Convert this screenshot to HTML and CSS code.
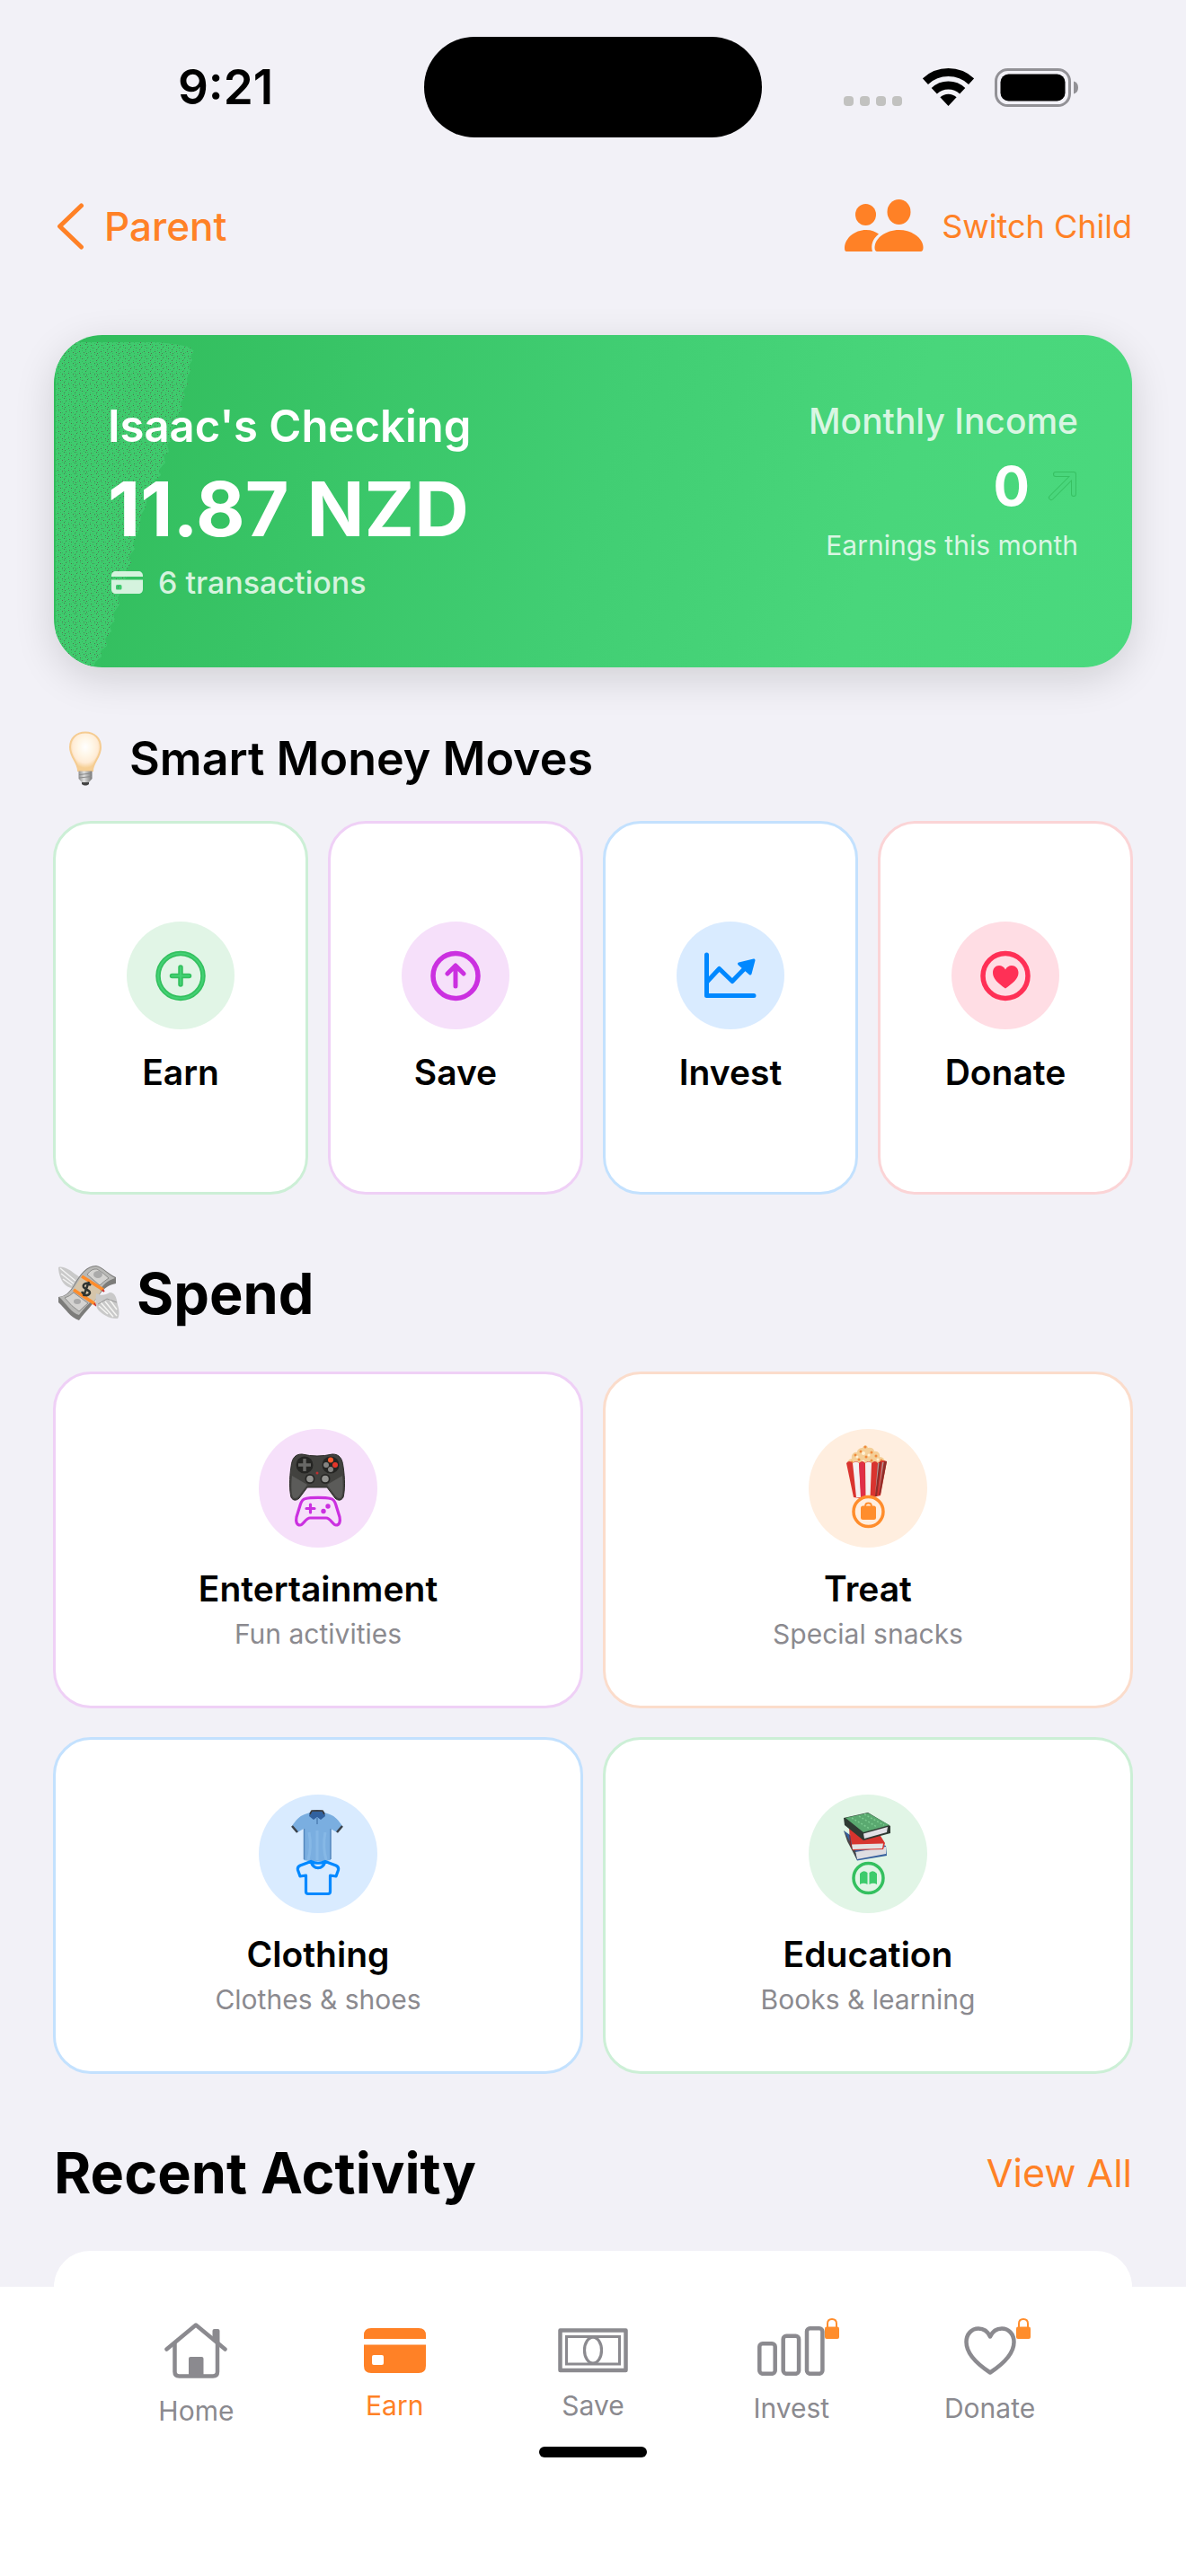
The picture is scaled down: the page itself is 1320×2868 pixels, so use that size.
FILE: index.html
```html
<!DOCTYPE html>
<html lang="en">
<head>
<meta charset="utf-8">
<meta name="viewport" content="width=device-width, initial-scale=1">
<title>Isaac's Checking</title>
<link rel="stylesheet" href="styles.css">
</head>
<body>
<div class="app">
  <div class="status-bar">
    <span class="status-time">9:21</span>
    <span class="island"></span>
    <div class="status-icons">
      <svg width="65" height="42" viewBox="0 0 65 42" fill="#c2c2c0" aria-hidden="true"><rect y="31" width="11" height="11" rx="4"/><rect x="18" y="31" width="11" height="11" rx="4"/><rect x="36" y="31" width="11" height="11" rx="4"/><rect x="54" y="31" width="11" height="11" rx="4"/></svg>
      <svg width="57" height="42" viewBox="0 0 57 42" fill="none" stroke="#000" stroke-width="9" aria-hidden="true"><path d="M2.9 14.6A37.5 37.5 0 0 1 54.1 14.6M12.8 25.2A23 23 0 0 1 44.2 25.2"/><path d="M28.500 42L19.400 32.300A13.300 13.300 0 0 1 37.600 32.300Z" fill="#000" stroke="none"/></svg>
      <svg width="93" height="43" viewBox="0 0 93 43" aria-hidden="true"><rect x="1.500" y="1.500" width="82" height="40" rx="13" fill="none" stroke="#929196" stroke-width="3"/><rect x="6.500" y="6.500" width="72" height="30" rx="9"/><path d="M88 14.500C91.500 15.500 93 18 93 21.500S91.500 27.500 88 28.500Z" fill="#929196"/></svg>
    </div>
  </div>

  <header class="top-nav">
    <button class="nav-button nav-back" type="button">
      <svg width="36" height="52" viewBox="0 0 36 52" fill="none" stroke="currentColor" stroke-width="5" stroke-linecap="round" stroke-linejoin="round" aria-hidden="true"><path d="M30.500 3L6.500 26L30.500 49"/></svg>
      <span>Parent</span>
    </button>
    <button class="nav-button nav-switch" type="button">
      <svg width="88" height="60" viewBox="0 0 88 60" fill="currentColor" aria-hidden="true"><ellipse cx="23.500" cy="17" rx="11.500" ry="12"/><ellipse cx="60.500" cy="14" rx="13" ry="14"/><path d="M3 58C0 58 0 56 0 53C1 43 11 34 24 34C30 34 34 36 38 38.500C31 44 29 51 31 58Z"/><path d="M37 58C34 58 33.500 56 33.500 53C34 43 46 34 60.500 34S87 43 87.500 53C87.500 56 87 58 84 58Z"/></svg>
      <span>Switch Child</span>
    </button>
  </header>

  <main class="content">
    <section class="balance-card">
      <svg class="balance-texture" width="160" height="370" viewBox="0 0 160 370" aria-hidden="true">
        <defs><pattern id="grain" width="12" height="12" patternUnits="userSpaceOnUse"><rect width="12" height="12" fill="#40ca6e"/><g fill="#33bb5b"><rect x="2" width="1" height="1"/><rect x="5" y="1" width="1" height="1"/><rect x="9" y="2" width="1" height="1"/><rect y="3" width="1" height="1"/><rect x="4" y="4" width="1" height="1"/><rect x="7" y="5" width="1" height="1"/><rect x="11" y="6" width="1" height="1"/><rect x="2" y="7" width="1" height="1"/><rect x="5" y="8" width="1" height="1"/><rect x="9" y="9" width="1" height="1"/><rect x="1" y="10" width="1" height="1"/><rect x="7" y="11" width="1" height="1"/></g><g fill="#52704f"><rect x="1" y="1" width="1" height="1"/><rect x="7" y="2" width="1" height="1"/><rect x="11" y="4" width="1" height="1"/><rect x="4" y="6" width="1" height="1"/><rect x="9" y="7" width="1" height="1"/><rect y="8" width="1" height="1"/><rect x="5" y="11" width="1" height="1"/><rect x="11" y="10" width="1" height="1"/></g></pattern></defs>
        <path fill="url(#grain)" d="M2 370V32C6 20 13 12 24 8H115L134 10L150 13L156 18L152 24L154 28L150 34L152 40L148 48L149 55L144 62L146 68L141 76L143 82L137 90L139 96L132 104L130 118L126 122L128 130L122 134L124 142L117 150L119 156L112 162L110 172L104 180L102 192L97 200L95 216L88 232L90 238L84 246L86 254L80 262L82 268L76 276L78 284L71 292L73 300L66 310L68 318L62 324L64 330L57 338L59 346L52 352L53 358L46 364L44 370Z"/>
      </svg>
      <div class="balance-main">
        <h1 class="balance-name">Isaac's Checking</h1>
        <p class="balance-amount">11.87 NZD</p>
        <p class="balance-count">
          <svg width="36" height="26" viewBox="0 0 36 26" fill="currentColor" fill-rule="evenodd" aria-hidden="true"><path d="M0 6V5C0 2 2 0 5 0H30C33 0 35 2 35 5V6ZM0 9.500H35V20C35 23 33 25 30 25H5C2 25 0 23 0 20ZM5 15.500V19Q5 20.500 6.500 20.500H10Q11.500 20.500 11.500 19V16.500Q11.500 15 10 15H6.500Q5 15 5 16.500Z"/></svg>
          <span>6 transactions</span>
        </p>
      </div>
      <div class="balance-side">
        <p class="income-label">Monthly Income</p>
        <p class="income-value">
          <span>0</span>
          <svg width="34" height="34" viewBox="0 0 34 34" fill="none" stroke-linecap="round" stroke-linejoin="round" aria-hidden="true"><g stroke="#37c062" stroke-width="6"><path d="M4 30L28 6M9 4H29V26"/></g><g stroke="#49d67c" stroke-width="4"><path d="M4 30L28 6M9 4H29V26"/></g></svg>
        </p>
        <p class="income-note">Earnings this month</p>
      </div>
    </section>

    <section>
      <h2 class="section-title">
        <svg width="70" height="62" viewBox="0 0 70 62" aria-hidden="true">
          <defs><radialGradient id="glass" cx=".5" cy=".38" r=".55"><stop offset="0" stop-color="#fff"/><stop offset=".45" stop-color="#fff6e6"/><stop offset=".75" stop-color="#ffecd6"/><stop offset="1" stop-color="#f6cf94"/></radialGradient><linearGradient id="cap"><stop offset="0" stop-color="#8f8f8f"/><stop offset=".4" stop-color="#dedede"/><stop offset="1" stop-color="#777"/></linearGradient></defs>
          <path d="M27 44C27 35 18 29 18 18C18 8 25 1.500 35 1.500S52 8 52 18C52 29 43 35 43 44Z" fill="url(#glass)" stroke="#f5cc92" stroke-width="2"/>
          <path d="M27.500 44.500H42.500V53L39 57V59Q35 62 31 59V57L27.500 53Z" fill="url(#cap)"/><path d="M28 48.500L42 47M28 52L42 50.500" stroke="#8a8a8a"/><path d="M31 57H39V59Q35 62 31 59Z" fill="#444"/>
        </svg>
        <span>Smart Money Moves</span>
      </h2>
      <div class="moves-grid">
        <button class="tile move green" type="button">
          <span class="move-badge"><svg width="120" height="120" viewBox="0 0 120 120" fill="none" stroke-linecap="round" aria-hidden="true"><g stroke="#34c05f" stroke-width="5.500"><circle cx="60" cy="60.500" r="25"/><path d="M50.500 60.500H69.500M60 51V70"/></g><g stroke="#43d174" stroke-width="2"><circle cx="60" cy="60.500" r="25"/><path d="M50.500 60.500H69.500M60 51V70"/></g></svg></span>
          <span class="tile-title">Earn</span>
        </button>
        <button class="tile move purple" type="button">
          <span class="move-badge"><svg width="120" height="120" viewBox="0 0 120 120" fill="none" stroke="#cb30e0" stroke-width="5.500" stroke-linecap="round" stroke-linejoin="round" aria-hidden="true"><circle cx="60" cy="60.500" r="25"/><path d="M60 50V72M51 58L60 49L69 58" stroke-width="5"/></svg></span>
          <span class="tile-title">Save</span>
        </button>
        <button class="tile move blue" type="button">
          <span class="move-badge"><svg width="120" height="120" viewBox="0 0 120 120" fill="none" stroke="#08f" stroke-width="5" stroke-linecap="round" stroke-linejoin="round" aria-hidden="true"><path d="M33.500 37V82.500H86"/><path d="M34 67L47.500 52.500L62 66.500L78 50"/><path d="M69.500 47L86 43L82 58Z" fill="#08f" stroke-width="3"/></svg></span>
          <span class="tile-title">Invest</span>
        </button>
        <button class="tile move pink" type="button">
          <span class="move-badge"><svg width="120" height="120" viewBox="0 0 120 120" aria-hidden="true"><circle cx="60" cy="60.500" r="25" fill="none" stroke="#ff3056" stroke-width="5.500"/><path d="M60 74.500C52 69 46 63.500 46 57C46 52 49 49 53 49C56 49 58.500 50.500 60 53.500C61.500 50.500 64 49 67 49C71 49 74.500 52 74.500 57C74.500 63.500 68 69 60 74.500Z" fill="#ff3056"/></svg></span>
          <span class="tile-title">Donate</span>
        </button>
      </div>
    </section>

    <section>
      <h2 class="section-title large">
        <svg width="74" height="62" viewBox="0 0 74 62" aria-hidden="true">
          <path d="M5 2C10 0 18 5 23 9L29 13L20 25C14 24 10 20 8 15C6 11 5 6 5 2Z" fill="#c9c9c9"/><path d="M7 3L24 17M8 9L22 20M10 15L20 22" stroke="#f3f3f3" stroke-width="1.500"/>
          <path d="M5 35C13 34 17 30 22 22C29 10 36 0 47 0C54 1 61 10 69 13V20C61 22 57 24 51 32C43 44 36 50 28 61C18 58 13 48 5 41Z" fill="#7c7c7a"/>
          <path d="M6 35C14 34 18 30 23 22C30 10 37 1 47 1C54 2 61 11 68 14C59 17 55 21 49 30C42 41 35 45 28 55C20 53 14 43 6 35Z" fill="#b9b9b7"/>
          <path d="M37 10Q42 3 48 4Q55 8 61 14Q55 18 51 22ZM12 36Q18 34 22 30L38 42Q33 46 28 51Q20 46 12 36Z" fill="#d4d3d1" stroke="#8e8e8c"/>
          <ellipse cx="49" cy="10" rx="5" ry="4" fill="#aaa"/><ellipse cx="26" cy="40" rx="4" ry="3" fill="#aaa"/>
          <path d="M30 13L53 28L44 41L22 26Z" fill="#d5c5aa"/><path d="M31 12L55 27M22 27L46 43" stroke="#ff8c2b" stroke-width="3.500"/><path d="M54 27L56 29M45 42L47 45" stroke="#c33" stroke-width="2"/>
          <path d="M41 22C36 17 30 22 34 25C38 28 42 29 39 32C36 35 32 31 31 29M39 18L33 34" fill="none" stroke="#2f3430" stroke-width="2.500"/>
          <path d="M47 31C53 34 57 33 62 30C69 30 70 38 71 44C73 50 73 56 71 59C63 60 53 54 49 49C46 44 46 40 47 31Z" fill="#c9c9c9"/><path d="M50 45L60 54M52 41L66 57M57 40L70 56M62 38L70 49" stroke="#f5f5f3" stroke-width="1.500"/><path d="M49 43L59 37L70 41" stroke="#999" fill="none"/>
        </svg>
        <span>Spend</span>
      </h2>
      <div class="spend-grid">
        <button class="tile spend purple" type="button">
          <span class="spend-badge"><svg width="132" height="132" viewBox="0 0 132 132" aria-hidden="true">
            <path d="M48 28Q65 32 82 28C90 28 93 33 94 42C96 55 96 68 94 76C92 80 88 80 85 77L76 65H54L45 77C42 80 38 80 36 76C34 68 34 55 36 42C37 33 40 28 48 28Z" fill="#42423f" stroke="#2c2c29"/>
            <path d="M37 52C36 62 36 70 38 76C40 78 43 77 45 74L54 62ZM93 52C94 62 94 70 92 76C90 78 87 77 85 74L76 62Z" fill="#5b5b59"/>
            <circle cx="51" cy="40" r="9.500" fill="#252523"/><circle cx="80" cy="40" r="9.500" fill="#252523"/><path d="M51 33V47M44 40H58" stroke="#686866" stroke-width="3.500"/>
            <circle cx="80" cy="34.500" r="3" fill="#ff5a2c"/><circle cx="85" cy="40" r="3" fill="#e5362b"/><circle cx="75" cy="40" r="3" fill="#858583"/><circle cx="80" cy="45" r="3" fill="#858583"/><circle cx="65" cy="49" r="1.500" fill="#c03030"/>
            <circle cx="57" cy="55.500" r="5.500" fill="#272725"/><circle cx="57" cy="55.500" r="3.800" fill="#92928f"/><circle cx="74" cy="55.500" r="5.500" fill="#272725"/><circle cx="74" cy="55.500" r="3.800" fill="#92928f"/>
            <g fill="none" stroke="#cb30e0" stroke-width="3.200" stroke-linecap="round" stroke-linejoin="round"><path d="M52 77.500C58 76 74 76 80 77.500C84 78 85 82 86 85L90 98C91 103 90 107 86 107C82 107 80 99 75 99H57C52 99 50 107 46 107C42 107 41 103 42 98L46 85C47 82 48 78 52 77.500Z"/><path d="M57.500 84V93M53 88.500H62"/></g><circle cx="77" cy="86" r="2.700" fill="#cb30e0"/><circle cx="72" cy="91.500" r="2.700" fill="#cb30e0"/>
          </svg></span>
          <span class="tile-title">Entertainment</span>
          <span class="tile-note">Fun activities</span>
        </button>
        <button class="tile spend orange" type="button">
          <span class="spend-badge"><svg width="132" height="132" viewBox="0 0 132 132" aria-hidden="true">
            <path d="M43 39C43 35 46 33 48 33C47 28 51 25 54 26C54 22 58 21 60 21C61 18 65 17 66 21C70 20 73 22 73 25C77 24 80 28 79 31C83 31 85 34 85 38L80 43H48Z" fill="#f4cf98"/>
            <g fill="#f08a3b"><circle cx="52" cy="29" r="1.500"/><circle cx="58" cy="25" r="1.500"/><circle cx="63" cy="20" r="1.500"/><circle cx="70" cy="26" r="1.500"/><circle cx="64" cy="31" r="1.500"/><circle cx="75" cy="30" r="1.500"/><circle cx="56" cy="34" r="1.500"/><circle cx="70" cy="35" r="1.500"/><circle cx="81" cy="35" r="1.500"/><circle cx="48" cy="37" r="1.500"/></g><g fill="#fff0d4"><circle cx="61" cy="27" r="2"/><circle cx="67" cy="29" r="1.500"/><circle cx="54" cy="31" r="1.500"/><circle cx="77" cy="34" r="1.500"/><circle cx="61" cy="36" r="1.500"/></g>
            <path d="M42 38Q45 34 49 38Q53 34 56 38Q60 34 63 38Q67 34 70 38Q74 34 77 38Q81 33 87 36L80 74Q65 79 50 76Z" fill="#d9342f"/>
            <path d="M49 38Q53 35 56 38L58.500 76H53ZM63 38Q67 35 70 38L68.500 77H63.500Z" fill="#f4f1f1"/><path d="M56 38Q59 36 62 38L63 77H58Z" fill="#e02f48"/><path d="M78 38L81 36L76 75L74 75ZM84 36L87 36L80 72L78 74Z" fill="#8f2f2a"/><path d="M77 38L78.500 38L74 73ZM82 37L83.500 37L78 71Z" fill="#a99"/>
            <circle cx="66.500" cy="92" r="16.500" fill="#ffeedf" stroke="#ff8d2c" stroke-width="3.500"/><rect x="58" y="85.500" width="17" height="15.500" rx="2.500" fill="#ff8d2c"/><path d="M63 86Q63 82.500 66.500 82.500T70 86" fill="none" stroke="#ff8d2c" stroke-width="1.800"/>
          </svg></span>
          <span class="tile-title">Treat</span>
          <span class="tile-note">Special snacks</span>
        </button>
        <button class="tile spend blue" type="button">
          <span class="spend-badge"><svg width="132" height="132" viewBox="0 0 132 132" aria-hidden="true">
            <path d="M57 20L51 22C45 24 41 29 37 35L43 42L50 38V73Q65 76 80 73V38L87 42L93 35C89 29 85 24 79 22L73 20Z" fill="#7aaee0"/>
            <path d="M56 42C58 52 58 62 55 73M65 40V73M74 42C72 52 72 62 75 73" stroke="#86b8e6" stroke-width="3" fill="none"/><path d="M50.500 38V72M80 38V72" stroke="#5487bd" stroke-width="1.500"/>
            <path d="M37 35L43 42M93 35L87 42" stroke="#3a4048" stroke-width="2.500"/><path d="M57 19Q65 15 73 19L74 24L69 28L65 25L61 28L56 24Z" fill="#31619f"/><path d="M57 22L59 18H71L73 22" stroke="#3f3a34" stroke-width="1.500" fill="none"/><path d="M65 26V33" stroke="#4f7fb4" stroke-width="1.500"/>
            <path d="M58 74.500L46 79C44 80 43 82 43.500 84L46 91L52.500 90V108Q52.500 110.500 55 110.500H77Q79.500 110.500 79.500 108V90L86 91L88.500 84C89 82 88 80 86 79L74 74.500C71 84 61 84 58 74.500ZM58 74.500Q66 78 74 74.500" fill="#d9ebff" stroke="#08f" stroke-width="3.200" stroke-linejoin="round"/>
          </svg></span>
          <span class="tile-title">Clothing</span>
          <span class="tile-note">Clothes &amp; shoes</span>
        </button>
        <button class="tile spend green" type="button">
          <span class="spend-badge"><svg width="132" height="132" viewBox="0 0 132 132" aria-hidden="true">
            <path d="M39 40L46 45L86 57L87 68L54 73.500Z" fill="#35609d"/><path d="M52 64L86 58L86 66L54 72Z" fill="#dedee2"/><path d="M39 40L52 63L54 73L43 52Z" fill="#48484a"/>
            <path d="M45 38L80 46L85 54L83 61L49 62Z" fill="#d7342e"/><path d="M48 55.500L83 54.500L82 60L49 61Z" fill="#e4e2e2"/><path d="M45 38L48 60L46 56Z" fill="#8e211d"/>
            <path d="M39 26L66 20L91 35L91 43L61 51L40 34Z" fill="#2f3a33"/><path d="M41 26L66 20.500L90 34L61 42Z" fill="#5aa970"/><path d="M61 43.500L88 36L87 42L62 49Z" fill="#e2e1e6"/>
            <path d="M48 26L68 38M56 24L76 36M62 22L84 34" stroke="#7ccb90" stroke-width="1.500" stroke-dasharray="2 2"/>
            <circle cx="66.500" cy="93" r="16.500" fill="none" stroke="#34c05f" stroke-width="3.500"/><path d="M57 88Q61 83 65.500 87V100Q61 97.500 57 100ZM67.500 87Q72 83 76 88V100Q72 97.500 67.500 100Z" fill="#3dcb6c"/>
          </svg></span>
          <span class="tile-title">Education</span>
          <span class="tile-note">Books &amp; learning</span>
        </button>
      </div>
    </section>

    <section class="activity">
      <div class="activity-head">
        <h2 class="section-title large">Recent Activity</h2>
        <a class="view-all" href="#activity">View All</a>
      </div>
      <div class="activity-card" id="activity"></div>
    </section>
  </main>

  <footer class="tab-bar">
    <nav class="tabs" aria-label="Main">
      <a class="tab" href="#home">
        <svg width="70" height="62" viewBox="0 0 70 62" fill="none" stroke="currentColor" stroke-width="4.500" stroke-linecap="round" stroke-linejoin="round" aria-hidden="true"><path d="M2.500 29.500L35 2.500L67.500 29.500"/><path d="M11.500 23V54.500Q11.500 59.500 16.500 59.500H54Q59 59.500 59 54.500V23"/><path d="M55.500 9H59.500V22L55.500 19Z" stroke-width="4"/><path d="M27 60V40Q27 38 29 38H41.500Q43.500 38 43.500 40V60Z" fill="currentColor" stroke="none"/></svg>
        <span>Home</span>
      </a>
      <a class="tab active" href="#earn" aria-current="page">
        <svg width="69" height="50" viewBox="0 0 69 50" fill="currentColor" fill-rule="evenodd" aria-hidden="true"><path d="M0 12V8Q0 0 8 0H61Q69 0 69 8V12ZM0 18.500H69V42Q69 50 61 50H8Q0 50 0 42ZM9 32V39Q9 41 11 41H20Q22 41 22 39V32Q22 30 20 30H11Q9 30 9 32Z"/></svg>
        <span>Earn</span>
      </a>
      <a class="tab" href="#save">
        <svg width="78" height="50" viewBox="0 0 78 50" fill="none" stroke="currentColor" aria-hidden="true"><rect x="2.500" y="2.500" width="73" height="44.500" stroke-width="4.500" stroke-linejoin="round"/><rect x="9.500" y="9.500" width="59" height="30.500" stroke-width="3"/><ellipse cx="39" cy="24.700" rx="9.500" ry="14.500" stroke-width="3.200"/></svg>
        <span>Save</span>
      </a>
      <a class="tab" href="#invest">
        <span class="tab-icon">
          <svg width="75" height="55" viewBox="0 0 75 55" fill="none" stroke="currentColor" stroke-width="4.500" aria-hidden="true"><rect x="2.300" y="19.300" width="17.400" height="33.500" rx="3.500"/><rect x="28.700" y="10.800" width="17.400" height="42" rx="3.500"/><rect x="55" y="2.300" width="17.400" height="50.500" rx="3.500"/></svg>
          <svg class="lock" width="16" height="24" viewBox="0 0 16 24" aria-label="Locked"><rect y="9.500" width="16" height="13.500" rx="2" fill="#ff8d2c"/><path d="M3 10V6Q3 1 8 1T13 6V10" fill="none" stroke="#ff8d2c" stroke-width="2"/></svg>
        </span>
        <span>Invest</span>
      </a>
      <a class="tab" href="#donate">
        <span class="tab-icon">
          <svg width="58" height="55" viewBox="0 0 58 55" fill="none" stroke="currentColor" stroke-width="4.500" stroke-linejoin="round" aria-hidden="true"><path d="M29 51.500C16 43 2.500 32 2.500 17.500C2.500 8.500 8.500 2.500 16 2.500C22 2.500 26.500 6 29 11.500C31.500 6 36 2.500 42 2.500C49.500 2.500 55.500 8.500 55.500 17.500C55.500 32 42 43 29 51.500Z"/></svg>
          <svg class="lock" width="16" height="24" viewBox="0 0 16 24" aria-label="Locked"><rect y="9.500" width="16" height="13.500" rx="2" fill="#ff8d2c"/><path d="M3 10V6Q3 1 8 1T13 6V10" fill="none" stroke="#ff8d2c" stroke-width="2"/></svg>
        </span>
        <span>Donate</span>
      </a>
    </nav>
    <div class="home-indicator"></div>
  </footer>
</div>
</body>
</html>
```

FILE: styles.css
```css
* {
  box-sizing: border-box;
}

body,
h1,
h2,
p {
  margin: 0;
}

body {
  background: #f2f1f7;
  color: #000;
  font-family: Inter, "Liberation Sans", sans-serif;
}

button {
  border: 0;
  padding: 0;
  background: none;
  color: inherit;
  font: inherit;
  cursor: pointer;
}

a {
  color: inherit;
  text-decoration: none;
}

svg {
  display: block;
  flex: none;
}

.app {
  display: flex;
  flex-direction: column;
  min-height: 100vh;
}

/* Status bar */
.status-bar {
  display: grid;
  grid-template-columns: 1fr auto 1fr;
  align-items: center;
  justify-items: center;
  padding: 41px 30px 0;
}

.status-time {
  font-size: 53px;
  line-height: 64px;
  font-weight: 600;
}

.island {
  width: 376px;
  height: 112px;
  border-radius: 56px;
  background: #000;
}

.status-icons {
  display: flex;
  align-items: center;
  gap: 23px;
}

/* Navigation */
.top-nav {
  display: flex;
  justify-content: space-between;
  align-items: center;
  padding: 69px 60px 0;
}

.nav-button {
  display: flex;
  align-items: center;
  height: 60px;
  gap: 20px;
  color: #ff8126;
}

.nav-back {
  font-size: 44px;
  font-weight: 500;
}

.nav-switch {
  font-size: 36px;
}

/* Content */
.content {
  flex: 1;
  display: flex;
  flex-direction: column;
  gap: 70px;
  padding: 91px 60px 0;
}

.balance-card {
  position: relative;
  display: flex;
  justify-content: space-between;
  align-items: flex-start;
  padding: 72px 60px 74px;
  border-radius: 54px;
  overflow: hidden;
  background: linear-gradient(107deg, #30bb5a 0%, #41ce73 50%, #49d67b 75%, #4ad97e 100%);
  box-shadow: 0 12px 45px rgba(0, 0, 0, 0.14);
  color: #fff;
}

.balance-texture {
  position: absolute;
  left: 0;
  top: 0;
}

.balance-main,
.balance-side {
  position: relative;
  display: flex;
  flex-direction: column;
  gap: 12px;
}

.balance-side {
  align-items: flex-end;
}

.balance-name {
  font-size: 49px;
  line-height: 60px;
  font-weight: 600;
}

.balance-amount {
  font-size: 84px;
  line-height: 100px;
  font-weight: 700;
}

.balance-count {
  display: flex;
  align-items: center;
  gap: 16px;
  padding-left: 4px;
  color: #d5f3de;
  font-size: 34px;
  line-height: 40px;
  font-weight: 500;
}

.income-label {
  color: #d9f6e3;
  font-size: 39px;
  line-height: 48px;
  font-weight: 500;
}

.income-value {
  display: flex;
  align-items: center;
  gap: 20px;
  font-size: 60px;
  line-height: 72px;
  font-weight: 700;
}

.income-note {
  color: #d9f6e3;
  font-size: 30px;
  line-height: 36px;
}

/* Section headings */
.section-title {
  display: flex;
  align-items: center;
  gap: 14px;
  font-size: 52px;
  line-height: 64px;
  font-weight: 600;
}

.section-title.large {
  gap: 18px;
  font-size: 63px;
  line-height: 80px;
  font-weight: 700;
}

/* Tiles */
.tile {
  display: flex;
  flex-direction: column;
  align-items: center;
  justify-content: center;
  border: 3px solid var(--edge);
  border-radius: 42px;
  background: #fff;
}

.green {
  --edge: #ccefd6;
  --tint: #e1f5e6;
}

.purple {
  --edge: #efd0f6;
  --tint: #f6e0fa;
}

.blue {
  --edge: #c3e1fe;
  --tint: #d9ebff;
}

.pink {
  --edge: #fbd4d6;
  --tint: #ffdde4;
}

.orange {
  --edge: #fbdccb;
  --tint: #ffeedf;
}

.move-badge,
.spend-badge {
  border-radius: 50%;
  background: var(--tint);
}

.tile-title {
  font-size: 39px;
  line-height: 48px;
  font-weight: 600;
}

.tile-note {
  margin-top: 8px;
  color: #8b8a8f;
  font-size: 30px;
  line-height: 36px;
}

.moves-grid {
  display: grid;
  grid-template-columns: repeat(4, 1fr);
  gap: 22px;
  margin: 37px -1px 0;
}

.move {
  gap: 24px;
  padding: 109px 0;
}

.spend-grid {
  display: grid;
  grid-template-columns: repeat(2, 1fr);
  gap: 32px 22px;
  margin: 47px -1px 0;
}

.spend {
  padding: 61px 0 62px;
}

.spend .tile-title {
  margin-top: 22px;
}

/* Recent activity */
.activity {
  flex: 1;
  display: flex;
  flex-direction: column;
  gap: 47px;
}

.activity-head {
  display: flex;
  justify-content: space-between;
  align-items: center;
}

.view-all {
  color: #ff8126;
  font-size: 43px;
  line-height: 56px;
}

.activity-card {
  flex: 1;
  min-height: 36px;
  border-radius: 48px 48px 0 0;
  background: #fff;
}

/* Tab bar */
.tab-bar {
  padding: 40px 108px 132px;
  background: #fff;
}

.tabs {
  display: grid;
  grid-template-columns: repeat(5, 1fr);
  align-items: center;
}

.tab {
  display: flex;
  flex-direction: column;
  align-items: center;
  gap: 18px;
  color: #8b8a8f;
  font-size: 30px;
  line-height: 36px;
}

.tab.active {
  color: #ff8126;
}

.tab-icon {
  position: relative;
}

.lock {
  position: absolute;
  left: 100%;
  top: -9px;
}

.home-indicator {
  width: 120px;
  height: 12px;
  margin: 22px auto 0;
  border-radius: 6px;
  background: #000;
}
```
